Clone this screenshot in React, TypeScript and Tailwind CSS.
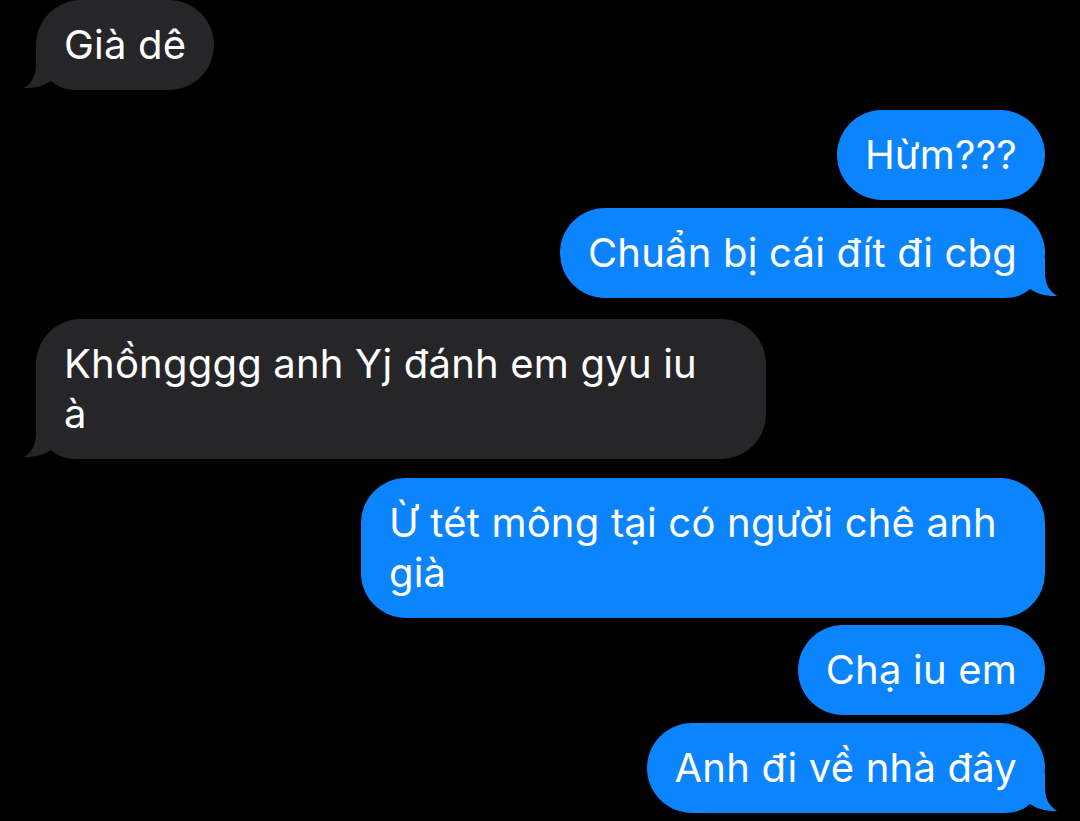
import React from 'react';

type Message = {
  from: 'me' | 'them';
  lines: string[];
  tail?: boolean;
  gapTop: string;
  width?: string;
};

const messages: Message[] = [
  { from: 'them', lines: ['Già dê'], tail: true, gapTop: 'mt-0' },
  { from: 'me', lines: ['Hừm???'], gapTop: 'mt-[20px]' },
  { from: 'me', lines: ['Chuẩn bị cái đít đi cbg'], tail: true, gapTop: 'mt-[8px]' },
  {
    from: 'them',
    lines: ['Khồngggg anh Yj đánh em gyu iu', 'à'],
    tail: true,
    gapTop: 'mt-[21px]',
    width: 'w-[730px]'
  },
  {
    from: 'me',
    lines: ['Ừ tét mông tại có người chê anh', 'già'],
    gapTop: 'mt-[19px]',
    width: 'w-[684px]'
  },
  { from: 'me', lines: ['Chạ iu em'], gapTop: 'mt-[7px]' },
  { from: 'me', lines: ['Anh đi về nhà đây'], tail: true, gapTop: 'mt-[8px]' }
];

// bubble tail, drawn for the left side and mirrored for outgoing messages
const Tail = ({ side, color }: { side: 'left' | 'right'; color: string }) => (
  <svg
    width="60"
    height="40"
    viewBox="0 0 60 40"
    className={
      side === 'left'
        ? 'absolute bottom-0 left-[-12px]'
        : 'absolute bottom-0 right-[-12px] -scale-x-100'
    }
  >
    <path
      d="M12 0 L12 14 C12 26 8 33 0 38 C10 38.5 20 36 27 31 C33 36 40 40 52 40 L60 40 L60 0 Z"
      fill={color}
    />
  </svg>
);

export default function App() {
  return (
    <div className="min-h-[821px] w-[1080px] overflow-hidden bg-black pl-[36px] pr-[35px] font-['Inter','Noto_Sans',sans-serif] text-[40px] tracking-[0.2px] text-white">
      <div className="flex flex-col">
        {messages.map((message, index) => {
          const mine = message.from === 'me';
          const color = mine ? '#0b84fe' : '#262628';
          return (
            <div
              key={index}
              className={`flex ${mine ? 'justify-end' : 'justify-start'} ${message.gapTop}`}
            >
              <div
                className={`relative rounded-[45px] px-[28px] py-[20px] leading-[50px] ${
                  mine ? 'bg-[#0b84fe]' : 'bg-[#262628]'
                } ${message.width ?? ''}`}
              >
                {message.tail && <Tail side={mine ? 'right' : 'left'} color={color} />}
                <div className="relative whitespace-nowrap">
                  {message.lines.map((line) => (
                    <div key={line}>{line}</div>
                  ))}
                </div>
              </div>
            </div>
          );
        })}
      </div>
    </div>
  );
}
